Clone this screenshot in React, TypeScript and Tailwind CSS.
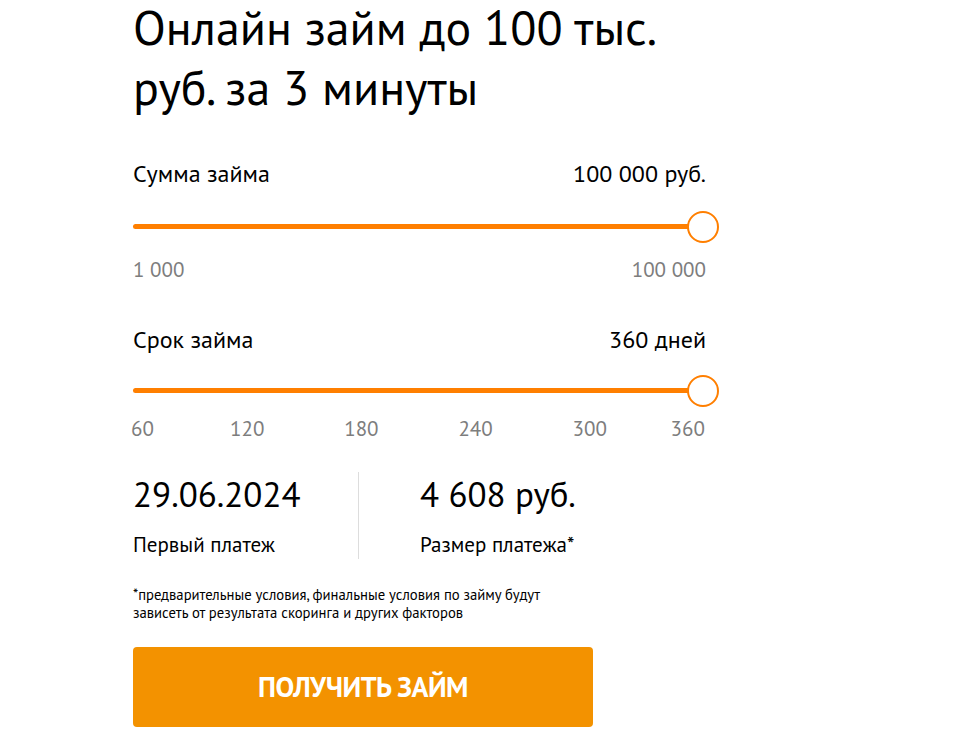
import React from "react";

function Slider() {
  return (
    <div className="relative h-[32px] w-[587px]">
      <div className="absolute left-0 top-[13px] h-[5px] w-[571px] rounded-full bg-[#ff7f00]" />
      <div className="absolute left-[554px] top-0 h-[32px] w-[32px] rounded-full border-2 border-[#ff7f00] bg-white" />
    </div>
  );
}

export default function App() {
  return (
    <div
      className="min-h-[741px] overflow-hidden bg-white text-black"
      style={{ fontFamily: '"PT Sans", "DejaVu Sans Condensed", "Noto Sans", sans-serif' }}
    >
      <div className="ml-[133px] w-[600px]">
        <h1 className="flex flex-col gap-[6px] text-[48px] leading-[54px] font-normal">
          <span>Онлайн займ до 100 тыс.</span>
          <span>руб. за 3 минуты</span>
        </h1>

        <div className="mt-[48px] flex w-[573px] justify-between text-[24px] leading-[24px]">
          <span>Сумма займа</span>
          <span>100 000 руб.</span>
        </div>
        <div className="mt-[25px]">
          <Slider />
        </div>
        <div className="mt-[16px] flex w-[573px] justify-between text-[21px] leading-[22px] text-[#7d7d7d]">
          <span>1 000</span>
          <span>100 000</span>
        </div>

        <div className="mt-[47px] flex w-[573px] justify-between text-[24px] leading-[24px]">
          <span>Срок займа</span>
          <span>360 дней</span>
        </div>
        <div className="mt-[23px]">
          <Slider />
        </div>
        <div className="mt-[11px] flex w-[571px] whitespace-nowrap text-[21px] leading-[22px] text-[#7d7d7d]">
          <div className="w-[114.2px]">
            <span className="-ml-[2px] inline-block">60</span>
          </div>
          <div className="w-[114.2px]">
            <span className="inline-block -translate-x-1/2">120</span>
          </div>
          <div className="w-[114.2px]">
            <span className="inline-block -translate-x-1/2">180</span>
          </div>
          <div className="w-[114.2px]">
            <span className="inline-block -translate-x-1/2">240</span>
          </div>
          <div className="w-[114.2px]">
            <span className="inline-block -translate-x-1/2">300</span>
          </div>
          <div className="w-0">
            <span className="ml-[1px] inline-block -translate-x-full">360</span>
          </div>
        </div>

        <div className="mt-[32px] flex">
          <div className="w-[226px] border-r border-[#dddddd] pt-[2px] pb-[2px]">
            <div className="text-[35px] leading-[40px]">29.06.2024</div>
            <div className="mt-[19px] text-[21px] leading-[24px]">Первый платеж</div>
          </div>
          <div className="pl-[61px] pt-[2px] pb-[2px]">
            <div className="text-[35px] leading-[40px]">4 608 руб.</div>
            <div className="mt-[19px] text-[21px] leading-[24px]">Размер платежа*</div>
          </div>
        </div>

        <p className="mt-[27px] w-[440px] text-[14.7px] leading-[18px]">
          *предварительные условия, финальные условия по займу будут зависеть от результата скоринга и других факторов
        </p>

        <button className="mt-[25px] flex h-[80px] w-[460px] items-center justify-center rounded-[4px] bg-[#f39200] text-[28px] font-bold tracking-[-0.5px] text-white">
          ПОЛУЧИТЬ ЗАЙМ
        </button>
      </div>
    </div>
  );
}
